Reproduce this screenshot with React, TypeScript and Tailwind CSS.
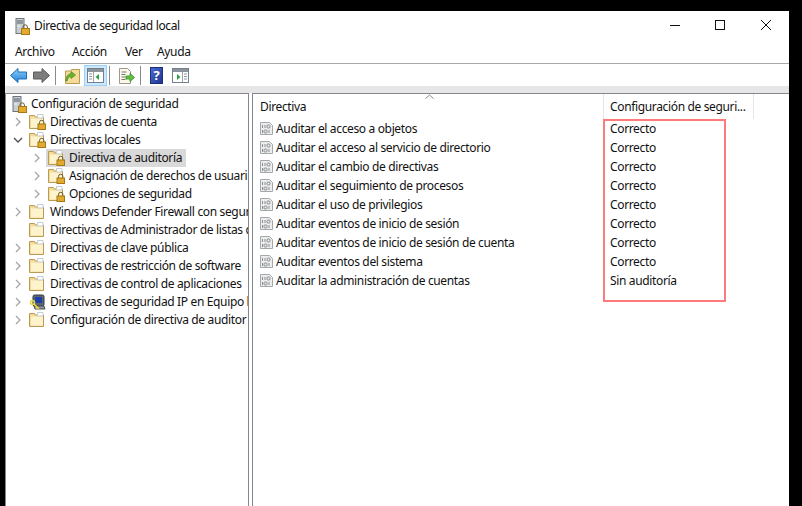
import React from 'react';

const font = { fontFamily: '"Noto Sans", "Open Sans", sans-serif' };

function ServerLock({ className = '' }: { className?: string }) {
  return (
    <svg className={className} width="15" height="17" viewBox="0 0 15 17">
      <rect x="1" y="0.500" width="8" height="15" fill="#c9ced3" stroke="#6d7680" />
      <rect x="2" y="2.500" width="6" height="1" fill="#59626b" />
      <rect x="2" y="4.500" width="6" height="1" fill="#59626b" />
      <rect x="2" y="7.500" width="3" height="1" fill="#f4f6f7" />
      <path d="M8 10.500V9a2.200 2.200 0 0 1 4.400 0v1.500" fill="none" stroke="#6b5a2c" />
      <rect x="6.500" y="10.500" width="8" height="6" fill="#e2aa2f" stroke="#a87716" />
    </svg>
  );
}

function Folder({ lock = false }: { lock?: boolean }) {
  return (
    <svg width="17" height="16" viewBox="0 0 17 16" className="shrink-0">
      <path d="M0.500 14.500V1.500h5l1 1.500h8v11.500z" fill="#f4dc98" stroke="#b99b55" />
      <rect x="2" y="4.500" width="12" height="9" fill="#fdf3cd" />
      <path d="M8.500 0.500h5.500v3.500H8.500z" fill="#fff" stroke="#c4ccd4" />
      {lock && (
        <>
          <path d="M10.500 10V8.500a2.200 2.200 0 0 1 4.400 0V10" fill="none" stroke="#6b5a2c" />
          <rect x="9" y="10" width="7.500" height="5.500" fill="#e2aa2f" stroke="#a87716" />
        </>
      )}
    </svg>
  );
}

function KeyPc() {
  return (
    <svg width="17" height="17" viewBox="0 0 17 17" className="shrink-0">
      <rect x="4" y="1" width="11" height="11" rx="1.500" fill="#5d6670" stroke="#33393f" />
      <rect x="6" y="3" width="7" height="6" fill="#1b3fa8" />
      <path d="M5 12h10l1 3H6z" fill="#8d949b" stroke="#4a5056" />
      <circle cx="3.500" cy="8.500" r="2" fill="none" stroke="#e8da3c" strokeWidth="1.600" />
      <path d="M5 10l5 5M8 13l-1 1.500" stroke="#e8da3c" strokeWidth="1.600" fill="none" />
    </svg>
  );
}

function PolicyDoc() {
  return (
    <svg width="15" height="15" viewBox="0 0 15 15" className="shrink-0">
      <path d="M1.500 1.500h9l3 3v9h-12z" fill="#eceded" stroke="#a3a8ad" />
      <path d="M3.500 4v3M6 4v3M3.500 9v3" stroke="#8a8f94" />
      <rect x="8" y="4" width="3" height="3" rx="1" fill="none" stroke="#8a8f94" />
      <rect x="5" y="9" width="3" height="3" rx="1" fill="none" stroke="#8a8f94" />
      <path d="M10 9v3" stroke="#8a8f94" />
    </svg>
  );
}

function Chevron({ open = false }: { open?: boolean }) {
  return (
    <svg width="10" height="10" viewBox="0 0 10 10" className="shrink-0">
      <path d={open ? 'M1 3l4 4 4-4' : 'M3 1l4 4-4 4'} fill="none" stroke={open ? '#4d4d4d' : '#a6a6a6'} strokeWidth="1.300" />
    </svg>
  );
}

function BackArrow() {
  return (
    <svg width="17" height="15" viewBox="0 0 17 15" className="shrink-0">
      <defs>
        <linearGradient id="backFill" x1="0" y1="0" x2="0" y2="1">
          <stop offset="0" stopColor="#8fd0fa" />
          <stop offset="1" stopColor="#1f7fd6" />
        </linearGradient>
      </defs>
      <path d="M0.500 7.500L8 0.500v3.500h8.500v7H8v3.500z" fill="url(#backFill)" stroke="#1f6fb8" />
    </svg>
  );
}

function ForwardArrow() {
  return (
    <svg width="17" height="15" viewBox="0 0 17 15" className="shrink-0">
      <path d="M16.500 7.500L9 0.500v3.500H0.500v7H9v3.500z" fill="#7d7d7d" stroke="#5c5c5c" />
    </svg>
  );
}

function PaneIcon({ right = false }: { right?: boolean }) {
  return (
    <svg width="17" height="15" viewBox="0 0 17 15" className="shrink-0">
      <rect x="0.500" y="0.500" width="16" height="14" fill="#fff" stroke="#77808a" />
      <rect x="1" y="1" width="15" height="3" fill="#8b949d" />
      {right ? (
        <>
          <path d="M10.500 4v10" stroke="#9aa2aa" />
          <path d="M12 6h3M12 8.500h3M12 11h3" stroke="#8b949d" />
          <path d="M5 6l3.500 3L5 12z" fill="#2f9e44" />
        </>
      ) : (
        <>
          <path d="M6.500 4v10" stroke="#9aa2aa" />
          <path d="M2 6h3M2 8.500h3M2 11h3" stroke="#8b949d" />
          <path d="M12 6L8.500 9l3.500 3z" fill="#2f9e44" />
        </>
      )}
    </svg>
  );
}

function UpFolder() {
  return (
    <svg width="15" height="16" viewBox="0 0 15 16" className="shrink-0">
      <path d="M0.500 15.500V3h5l1-1.500h8v14z" fill="#f3dc9a" stroke="#b99b55" />
      <path d="M1 13c0-5 2-7 5-7V3.500L10.500 7 6 10.500V8.500c-2 0-3.500 2-4 4.500z" fill="#6fb52c" stroke="#3f861a" strokeWidth="0.700" />
    </svg>
  );
}

function ExportDoc() {
  return (
    <svg width="17" height="16" viewBox="0 0 17 16" className="shrink-0">
      <path d="M1.500 0.500h8l3 3v12h-11z" fill="#fbf8ea" stroke="#9a9a8c" />
      <path d="M3.500 4h5M3.500 6.500h4M3.500 9h4M3.500 11.500h4" stroke="#77776c" />
      <path d="M8 8h4V5.500l4.500 4-4.500 4V11H8z" fill="#63c13a" stroke="#2f8f2f" strokeWidth="0.800" />
    </svg>
  );
}

function Help() {
  return (
    <div className="w-[13px] h-[17px] shrink-0 flex items-center justify-center bg-gradient-to-br from-[#4a6ad0] to-[#1f3590] border border-[#1d2f7a] text-white text-[13px] font-bold leading-none">?</div>
  );
}

const Sep = () => <div className="w-px h-[19px] bg-[#8a8a8a] shrink-0" />;

const tree = [
  { label: 'Directivas de cuenta', level: 1, icon: 'lock' },
  { label: 'Directivas locales', level: 1, icon: 'lock', open: true },
  { label: 'Directiva de auditoría', level: 2, icon: 'lock', selected: true },
  { label: 'Asignación de derechos de usuari', level: 2, icon: 'lock' },
  { label: 'Opciones de seguridad', level: 2, icon: 'lock' },
  { label: 'Windows Defender Firewall con segur', level: 1, icon: 'folder' },
  { label: 'Directivas de Administrador de listas d', level: 1, icon: 'folder', leaf: true },
  { label: 'Directivas de clave pública', level: 1, icon: 'folder' },
  { label: 'Directivas de restricción de software', level: 1, icon: 'folder' },
  { label: 'Directivas de control de aplicaciones', level: 1, icon: 'folder' },
  { label: 'Directivas de seguridad IP en Equipo l', level: 1, icon: 'key' },
  { label: 'Configuración de directiva de auditor', level: 1, icon: 'folder' },
];

const rows = [
  ['Auditar el acceso a objetos', 'Correcto'],
  ['Auditar el acceso al servicio de directorio', 'Correcto'],
  ['Auditar el cambio de directivas', 'Correcto'],
  ['Auditar el seguimiento de procesos', 'Correcto'],
  ['Auditar el uso de privilegios', 'Correcto'],
  ['Auditar eventos de inicio de sesión', 'Correcto'],
  ['Auditar eventos de inicio de sesión de cuenta', 'Correcto'],
  ['Auditar eventos del sistema', 'Correcto'],
  ['Auditar la administración de cuentas', 'Sin auditoría'],
];

export default function App() {
  return (
    <div className="w-[802px] h-[506px] bg-black pt-[11px] pl-[5px] pr-[13px] overflow-hidden text-[12px] tracking-[-0.35px] text-[#111]" style={font}>
      <div className="h-[495px] bg-white flex flex-col">
        {/* title bar */}
        <div className="h-[30px] flex items-center pl-[10px] shrink-0">
          <ServerLock className="shrink-0" />
          <span className="ml-[4px]">Directiva de seguridad local</span>
          <div className="ml-auto flex items-center pb-[2px]">
            <svg width="10" height="10" viewBox="0 0 10 10" className="mr-[35px]"><path d="M0 5.500h10" stroke="#111" /></svg>
            <svg width="10" height="10" viewBox="0 0 10 10" className="mr-[36px]"><rect x="0.500" y="0.500" width="9" height="9" fill="none" stroke="#111" /></svg>
            <svg width="10" height="10" viewBox="0 0 10 10" className="mr-[18px]"><path d="M0 0l10 10M10 0L0 10" stroke="#111" /></svg>
          </div>
        </div>

        {/* menu */}
        <div className="h-[22px] flex items-center pl-[10px] border-b border-[#a8a8a8] box-content shrink-0">
          <span className="w-[57px]">Archivo</span>
          <span className="w-[53px]">Acción</span>
          <span className="w-[32px]">Ver</span>
          <span>Ayuda</span>
        </div>

        {/* toolbar */}
        <div className="h-[22px] flex items-center pl-[5px] pt-px shrink-0">
          <BackArrow />
          <div className="w-[6px]" />
          <ForwardArrow />
          <div className="w-[5px]" />
          <Sep />
          <div className="w-[9px]" />
          <UpFolder />
          <div className="w-[4px]" />
          <div className="w-[23px] h-[21px] flex items-center justify-center bg-[#cce8ff] border border-[#99d1ff]">
            <PaneIcon />
          </div>
          <div className="w-[2px]" />
          <Sep />
          <div className="w-[8px]" />
          <ExportDoc />
          <div className="w-[5px]" />
          <Sep />
          <div className="w-[9px]" />
          <Help />
          <div className="w-[9px]" />
          <PaneIcon right />
        </div>

        {/* gray band under the toolbar */}
        <div className="h-[7px] bg-[#e6e6e6] shrink-0" />

        <div className="flex-1 flex min-h-0">
          {/* console tree */}
          <div className="w-[244px] border border-b-0 border-[#828790] overflow-hidden shrink-0 pt-px">
            <div className="h-[18px] flex items-center pl-[6px] whitespace-nowrap">
              <ServerLock className="shrink-0" />
              <span className="ml-[4px]">Configuración de seguridad</span>
            </div>
            {tree.map((item) => (
              <div key={item.label} className={item.level === 2 ? 'h-[18px] flex items-center whitespace-nowrap pl-[26px]' : 'h-[18px] flex items-center whitespace-nowrap pl-[7px]'}>
                {item.leaf ? <div className="w-[10px] shrink-0" /> : <Chevron open={item.open} />}
                <div className={item.selected ? 'ml-[4px] pl-[2px] h-[18px] flex items-center bg-[#d9d9d9] pr-[4px]' : 'ml-[6px] h-[18px] flex items-center'}>
                  {item.icon === 'key' ? <KeyPc /> : <Folder lock={item.icon === 'lock'} />}
                  <span className="ml-[4px]">{item.label}</span>
                </div>
              </div>
            ))}
          </div>

          <div className="w-[3px] shrink-0" />

          {/* result pane */}
          <div className="flex-1 border border-b-0 border-r-0 border-[#828790] relative overflow-hidden">
            <div className="h-[25px] flex items-center">
              <div className="w-[351px] h-full pl-[7px] flex items-center border-r border-[#e5e5e5] relative">
                <span>Directiva</span>
                <svg width="9" height="5" viewBox="0 0 9 5" className="absolute left-[172px] top-0">
                  <path d="M0.500 4.500L4.500 1l4 3.500" fill="none" stroke="#8a8a8a" />
                </svg>
              </div>
              <div className="w-[150px] h-full pl-[6px] flex items-center border-r border-[#e5e5e5] whitespace-nowrap">
                Configuración de seguri...
              </div>
            </div>
            {rows.map(([name, value]) => (
              <div key={name} className="h-[19px] flex items-center">
                <div className="w-[351px] flex items-center pl-[6px]">
                  <PolicyDoc />
                  <span className="ml-[2px]">{name}</span>
                </div>
                <span className="pl-[6px]">{value}</span>
              </div>
            ))}
            {/* red highlight drawn over the screenshot */}
            <div className="absolute left-[350px] top-[25px] w-[123px] h-[183px] border-2 border-[#ff7b7b]" />
          </div>
        </div>
      </div>
    </div>
  );
}
